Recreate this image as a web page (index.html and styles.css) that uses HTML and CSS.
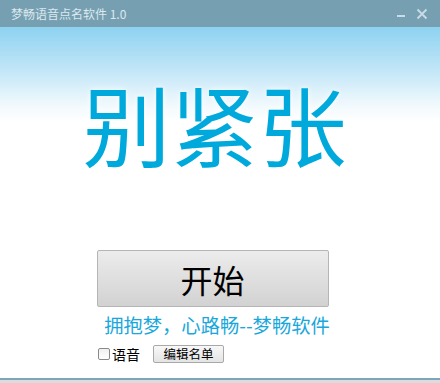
FILE: index.html
```html
<!DOCTYPE html>
<html lang="zh">
<head>
<meta charset="utf-8">
<link rel="stylesheet" href="styles.css">
</head>
<body>
<div class="window">
  <div class="titlebar">
    <span class="title">梦畅语音点名软件 1.0</span>
    <div class="controls">
      <svg class="ctl" width="12" height="12" viewBox="0 0 12 12"><rect x="2" y="7" width="8" height="2" fill="#c9dce5"/></svg>
      <svg class="ctl" width="12" height="12" viewBox="0 0 12 12"><path d="M1.5 1.5 L10.5 10.5 M10.5 1.5 L1.5 10.5" stroke="#c9dce5" stroke-width="1.8"/></svg>
    </div>
  </div>
  <div class="main">
    <div class="bigtext">别紧张</div>
    <button class="start">开始</button>
    <div class="slogan">拥抱梦，心路畅--梦畅软件</div>
    <div class="options">
      <label class="voice"><span class="check"></span>语音</label>
      <button class="edit">编辑名单</button>
    </div>
  </div>
  <div class="bottom"></div>
</div>
</body>
</html>
```
FILE: styles.css
```css
html, body {
  margin: 0;
  padding: 0;
  background: #ffffff;
}
.window {
  width: 440px;
  height: 383px;
  display: flex;
  flex-direction: column;
  font-family: "Noto Sans CJK SC", "Noto Sans", sans-serif;
  overflow: hidden;
}
.titlebar {
  height: 27px;
  background: #76a0b2;
  display: flex;
  align-items: center;
  justify-content: space-between;
  padding: 0 12px 0 11px;
  box-sizing: border-box;
}
.title {
  color: #dce8ee;
  font-size: 12px;
  line-height: 1;
}
.controls {
  display: flex;
  gap: 9px;
  align-items: center;
}
.main {
  flex: 1;
  background: linear-gradient(to bottom, #8dd2f0 0px, #c4e7f8 45px, #f3fafd 80px, #ffffff 95px, #ffffff 100%);
  display: flex;
  flex-direction: column;
  align-items: center;
}
.bigtext {
  margin-top: 51px;
  font-size: 88px;
  line-height: 1;
  height: 95px;
  color: #00a9dc;
  text-shadow: 0 0 6px rgba(255,255,255,0.9);
  margin-left: -11px;
}
.start {
  margin-top: 77px;
  width: 232px;
  height: 57px;
  border: 1px solid #b5b5b5;
  border-radius: 2px;
  background: linear-gradient(to bottom, #ececec, #d2d2d2);
  font-family: "Noto Sans CJK SC", sans-serif;
  font-size: 32px;
  color: #000;
  padding: 0;
  margin-left: -15px;
}
.slogan {
  margin-top: 6px;
  font-size: 19.3px;
  line-height: 24px;
  color: #1aa7dc;
  margin-left: -6px;
}
.options {
  display: flex;
  align-items: center;
  margin-top: 7px;
  margin-left: -118px;
  gap: 13px;
}
.voice {
  display: flex;
  align-items: center;
  font-size: 14px;
  color: #000;
  gap: 2px;
}
.check {
  width: 12px;
  height: 12px;
  border: 1px solid #8a8a8a;
  border-radius: 2px;
  background: linear-gradient(to bottom, #f0f0f0, #ffffff);
  box-sizing: border-box;
}
.edit {
  width: 71px;
  height: 18px;
  border: 1px solid #a8a8a8;
  border-radius: 2px;
  background: linear-gradient(to bottom, #f8f8f8, #e4e4e4);
  font-family: "Noto Sans CJK SC", sans-serif;
  font-size: 12.5px;
  line-height: 1;
  padding: 0;
  color: #000;
}
.bottom {
  height: 5px;
  border-top: 2px solid #7ea6b8;
  background: #dcdcdc;
  box-sizing: border-box;
}
```
